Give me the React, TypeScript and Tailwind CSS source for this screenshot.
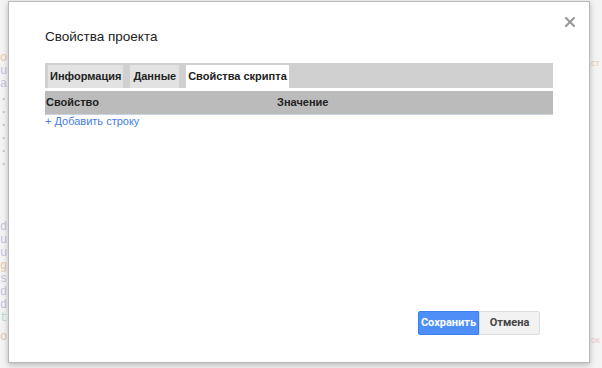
import React from 'react';

const App: React.FC = () => {
    return (
        <div className="relative h-[368px] w-[602px] overflow-hidden bg-[#f4f4f4] font-['Liberation_Sans',Arial,sans-serif]">
            {/* faded editor behind the modal */}
            <div className="flex flex-col pt-[52px] font-['Liberation_Mono',monospace] text-[12px] leading-[13px] text-[#c9c2e0]">
                <div className="text-[#e8c9a8]">обработки</div>
                <div>u</div>
                <div>a</div>
                <div className="text-[#bbb]">.</div>
                <div className="text-[#bbb]">.</div>
                <div className="text-[#bbb]">.</div>
                <div className="text-[#bbb]">.</div>
                <div className="text-[#bbb]">.</div>
                <div className="text-[#bbb]">.</div>
                <div className="h-[52px]" />
                <div>d</div>
                <div>u</div>
                <div>u</div>
                <div className="text-[#e8c9a8]">g</div>
                <div>s</div>
                <div>d</div>
                <div>d</div>
                <div className="text-[#b7dcd0]">t</div>
                <div className="h-[6px]" />
                <div className="text-[#d8c8b0]">ок обработки даты начала выборки</div>
            </div>
            <div className="absolute left-[591px] top-[57px] font-['Liberation_Sans',sans-serif] text-[9px] text-[#f0c9a8]">ст</div>
            <div className="absolute left-[591px] top-[334px] font-['Liberation_Sans',sans-serif] text-[9px] text-[#f0c9c0]">ок</div>

            {/* modal */}
            <div className="absolute left-[8px] top-[1px] flex h-[362px] w-[582px] flex-col border border-[#b8b8b8] bg-white px-[36px] shadow-[0_2px_6px_rgba(0,0,0,0.25)]">
                <button className="absolute right-[14px] top-[15px]">
                    <svg width="10" height="10" viewBox="0 0 10 10">
                        <path d="M1 1L9 9M9 1L1 9" stroke="#9a9a9a" strokeWidth="2.2" strokeLinecap="square" />
                    </svg>
                </button>
                <h1 className="pt-[25px] text-[13.5px] leading-[20px] text-[#222]">Свойства проекта</h1>
                <div className="mt-[16px] flex h-[25px] items-end gap-[7px] bg-[#d0d0d0] pl-[3px]">
                    <div className="flex h-[23px] items-center bg-[#e2e2e2] px-[2px] text-[11px] font-bold text-[#222]">Информация</div>
                    <div className="flex h-[23px] items-center bg-[#e2e2e2] px-[3px] text-[11px] font-bold text-[#222]">Данные</div>
                    <div className="flex h-[23px] items-center bg-white px-[2px] text-[11px] font-bold text-[#222]">Свойства скрипта</div>
                </div>
                <div className="mt-[3px] flex h-[24px] items-center border-b border-[#c9d2e0] bg-[#bbbbbb] text-[11px] font-bold text-[#222]">
                    <div className="w-[232px] pl-[1px]">Свойство</div>
                    <div>Значение</div>
                </div>
                <a href="#" className="mt-[-2px] text-[11px] leading-[16px] text-[#3f7ee8]">+ Добавить строку</a>
                <div className="flex-1" />
                <div className="mb-[27px] flex justify-end pr-[13px] font-['Roboto',sans-serif]">
                    <button className="h-[24px] w-[61px] rounded-l-[2px] border border-[#3b7ff0] bg-[#4d8ff7] text-[11px] font-bold text-white">Сохранить</button>
                    <button className="h-[24px] w-[61px] rounded-r-[2px] border border-[#dcdcdc] bg-[#f2f2f2] text-[11px] font-bold text-[#444]">Отмена</button>
                </div>
            </div>
        </div>
    );
};

export default App;
